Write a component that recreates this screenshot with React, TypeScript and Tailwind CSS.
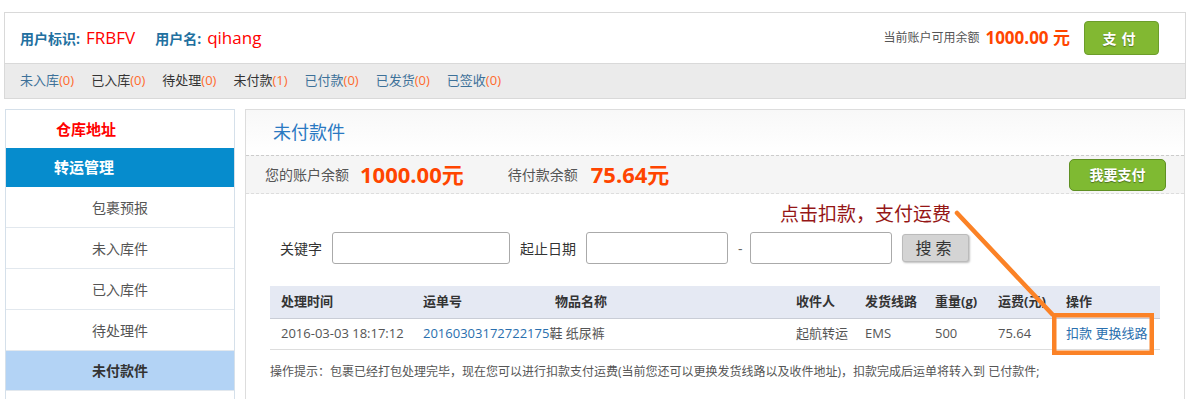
import React from "react";

const font = { fontFamily: '"Open Sans", "Noto Sans CJK SC", sans-serif' };

function NavItem({ label, count, dark }: { label: string; count: string; dark?: boolean }) {
  return (
    <span className={dark ? "text-[#333]" : "text-[#3d7199]"}>
      {label}
      <span className="text-[#ff6a2c]">({count})</span>
    </span>
  );
}

const cols = "grid grid-cols-[142px_132px_241px_69px_70px_63px_68px_105px]";

export default function App() {
  return (
    <div className="relative w-[1190px] h-[399px] overflow-hidden bg-white text-[13px]" style={font}>
      {/* Header */}
      <div className="ml-[4px] mt-[12px] w-[1182px] border border-[#d9d9d9]">
        <div className="flex h-[50px] items-center pl-[15px] pr-[26px]">
          <span className="text-[14px] font-bold text-[#22709f]">用户标识:</span>
          <span className="ml-[6px] text-[17px] text-[#ff0000]">FRBFV</span>
          <span className="ml-[20px] text-[14px] font-bold text-[#22709f]">用户名:</span>
          <span className="ml-[6px] text-[17px] text-[#ff0000]">qihang</span>
          <div className="ml-auto flex items-center">
            <span className="text-[12px] text-[#555]">当前账户可用余额</span>
            <span className="ml-[6px] text-[17px] font-bold text-[#ff4500]">1000.00 元</span>
            <button className="ml-[14px] flex h-[34px] w-[75px] items-center justify-center rounded-[4px] border border-[#6c9d2a] bg-[#82b832] text-[14px] font-bold tracking-[5px] text-white [text-shadow:0_1px_1px_rgba(0,0,0,0.35)]">
              支付
            </button>
          </div>
        </div>
        <div className="flex h-[35px] items-center gap-[17px] border-t border-[#d9d9d9] bg-[#ebebeb] pl-[15px] text-[13px]">
          <NavItem label="未入库" count="0" />
          <NavItem label="已入库" count="0" dark />
          <NavItem label="待处理" count="0" dark />
          <NavItem label="未付款" count="1" dark />
          <NavItem label="已付款" count="0" />
          <NavItem label="已发货" count="0" />
          <NavItem label="已签收" count="0" />
        </div>
      </div>

      {/* Body */}
      <div className="ml-[5px] mt-[10px] flex gap-[10px]">
        {/* Sidebar */}
        <div className="w-[230px] shrink-0 border border-[#d5e0ea]">
          <div className="flex h-[38px] items-center pl-[50px] text-[15px] font-bold text-[#ff0000]">仓库地址</div>
          <div className="flex h-[39px] items-center bg-[#068ccd] pl-[48px] text-[15px] font-bold text-white">转运管理</div>
          {["包裹预报", "未入库件", "已入库件", "待处理件"].map((t) => (
            <div key={t} className="flex h-[41px] items-center justify-center border-b border-[#e2e8ee] text-[14px] text-[#555]">
              {t}
            </div>
          ))}
          <div className="flex h-[40px] items-center justify-center border-b border-[#e2e8ee] bg-[#b3d3f5] text-[14px] font-bold text-[#333]">
            未付款件
          </div>
          <div className="h-[40px]" />
        </div>

        {/* Main panel */}
        <div className="w-[940px] shrink-0 border border-[#dddddd]">
          <div className="flex h-[45px] items-center bg-gradient-to-b from-[#f8f8f8] to-white pl-[27px] text-[18px] text-[#2a79c2]">
            未付款件
          </div>
          <div className="flex h-[39px] items-center border-t border-dashed border-t-[#cccccc] border-b border-b-[#dddddd] bg-[#f5f5f5] pl-[19px] pr-[18px]">
            <span className="text-[14px] text-[#555]">您的账户余额</span>
            <span className="ml-[11px] text-[22px] font-bold text-[#ff4500]">1000.00元</span>
            <span className="ml-[44px] text-[14px] text-[#555]">待付款余额</span>
            <span className="ml-[13px] text-[22px] font-bold text-[#ff4500]">75.64元</span>
            <button className="ml-auto flex h-[32px] w-[97px] items-center justify-center rounded-[5px] border border-[#5f9023] bg-[#7fba32] text-[14px] font-bold text-white [text-shadow:0_1px_1px_rgba(0,0,0,0.4)]">
              我要支付
            </button>
          </div>

          <div className="pl-[24px] pt-[38px]">
            {/* search */}
            <div className="flex items-center pl-[10px] text-[14px] text-[#333]">
              <span>关键字</span>
              <input className="ml-[10px] h-[32px] w-[178px] rounded-[3px] border border-[#aaaaaa] bg-white outline-none" />
              <span className="ml-[10px]">起止日期</span>
              <input className="ml-[10px] h-[32px] w-[142px] rounded-[3px] border border-[#aaaaaa] bg-white outline-none" />
              <span className="ml-[10px] w-[12px] text-[#666]">-</span>
              <input className="h-[32px] w-[142px] rounded-[3px] border border-[#aaaaaa] bg-white outline-none" />
              <button className="ml-[10px] flex h-[28px] w-[67px] items-center justify-center rounded-[3px] border border-[#bbbbbb] bg-[#d4d4d4] text-[16px] tracking-[4px] text-[#333] shadow-[1px_1px_2px_rgba(0,0,0,0.25)]">
                搜索
              </button>
            </div>

            {/* table */}
            <div className="mt-[22px] w-[890px]">
              <div className={`${cols} h-[33px] items-center border-b border-[#c9cdd6] bg-[#e5e9f3] font-bold text-[#333]`}>
                <div className="pl-[11px]">处理时间</div>
                <div className="pl-[11px]">运单号</div>
                <div className="pl-[11px]">物品名称</div>
                <div className="pl-[11px]">收件人</div>
                <div className="pl-[11px]">发货线路</div>
                <div className="pl-[11px]">重量(g)</div>
                <div className="pl-[11px]">运费(元)</div>
                <div className="pl-[11px]">操作</div>
              </div>
              <div className={`${cols} h-[31px] items-center border-b border-[#dddddd] text-[#555]`}>
                <div className="pl-[11px]">2016-03-03 18:17:12</div>
                <div className="col-span-2 pl-[11px] whitespace-nowrap">
                  <span className="text-[#2a6fae]">20160303172722175</span>
                  <span>鞋 纸尿裤</span>
                </div>
                <div className="pl-[11px]">起航转运</div>
                <div className="pl-[11px]">EMS</div>
                <div className="pl-[11px]">500</div>
                <div className="pl-[11px]">75.64</div>
                <div className="pl-[11px] text-[#2a6fae]">扣款 更换线路</div>
              </div>
              <div className="mt-[13px] whitespace-nowrap text-[12px] text-[#555]">
                操作提示：包裹已经打包处理完毕，现在您可以进行扣款支付运费(当前您还可以更换发货线路以及收件地址)，扣款完成后运单将转入到 已付款件;
              </div>
            </div>
          </div>
        </div>
      </div>

      {/* Annotation overlay */}
      <div className="absolute left-[780px] top-[201px] text-[19px] leading-[24px] text-[#951616]" style={{ fontFamily: '"Noto Sans CJK SC", sans-serif' }}>
        点击扣款，支付运费
      </div>
      <svg className="pointer-events-none absolute left-0 top-0" width="1190" height="399" viewBox="0 0 1190 399">
        <line x1="957" y1="213" x2="1052" y2="314" stroke="#fb8226" strokeWidth="4.5" strokeLinecap="round" />
        <rect x="1054.25" y="315.25" width="97.5" height="37.5" fill="none" stroke="#fb8226" strokeWidth="4.5" />
      </svg>
    </div>
  );
}
